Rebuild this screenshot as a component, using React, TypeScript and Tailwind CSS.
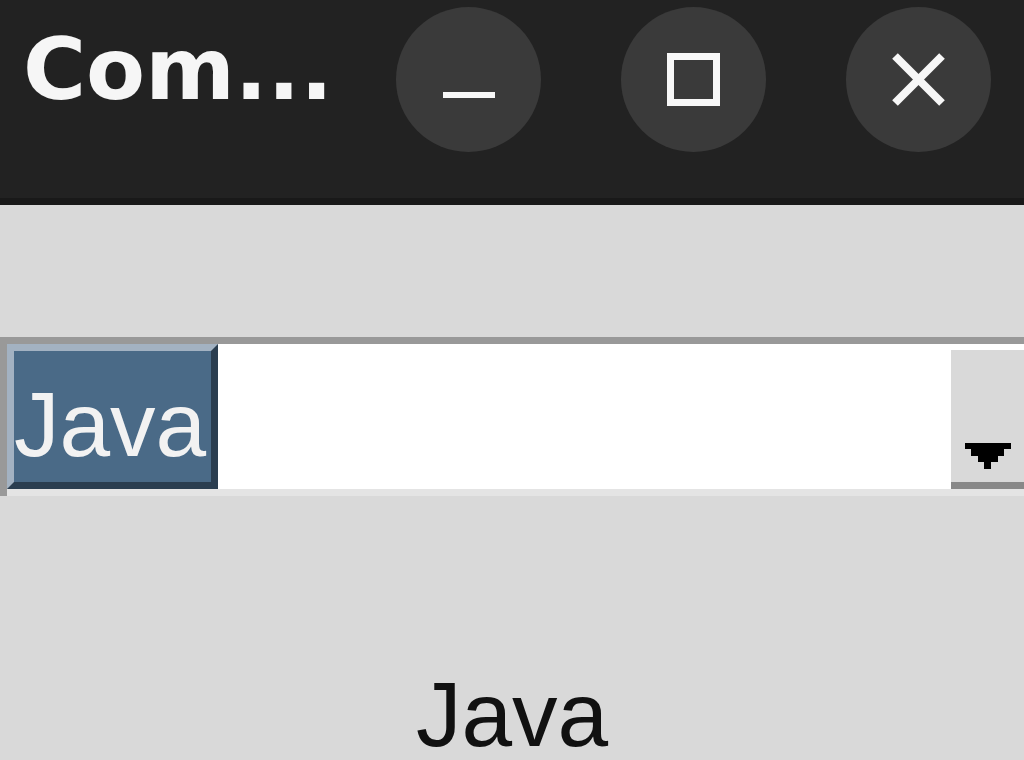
import React from "react";

function Arrow() {
  return (
    <svg width="46" height="26" viewBox="0 0 46 26" className="block">
      <polygon
        fill="#000"
        points="0,0 46,0 46,6 39,6 39,13 33,13 33,19 26,19 26,26 19,26 19,19 13,19 13,13 6,13 6,6 0,6"
      />
    </svg>
  );
}

export default function App() {
  const font = { fontFamily: '"DejaVu Sans", "Liberation Sans", sans-serif' };
  return (
    <div className="w-[1024px] h-[760px] overflow-hidden bg-[#d9d9d9] flex flex-col" style={font}>
      {/* title bar */}
      <div className="h-[198px] bg-[#222222] flex items-start justify-between">
        <div className="pl-[23px] pt-[26px] text-[86px] leading-[86px] font-bold text-[#f6f6f6] whitespace-nowrap">
          Com...
        </div>
        <div className="flex gap-[80px] pt-[7px] pr-[33px]">
          <div className="w-[145px] h-[145px] rounded-full bg-[#3a3a3a] flex items-center justify-center">
            <div className="w-[52px] h-[6px] bg-[#f7f7f7] mt-[30px]" />
          </div>
          <div className="w-[145px] h-[145px] rounded-full bg-[#3a3a3a] flex items-center justify-center">
            <div className="w-[53px] h-[53px] border-[7px] border-[#f7f7f7]" />
          </div>
          <div className="w-[145px] h-[145px] rounded-full bg-[#3a3a3a] flex items-center justify-center">
            <svg width="53" height="53" viewBox="0 0 53 53">
              <line x1="3" y1="3" x2="50" y2="50" stroke="#f7f7f7" strokeWidth="8" />
              <line x1="50" y1="3" x2="3" y2="50" stroke="#f7f7f7" strokeWidth="8" />
            </svg>
          </div>
        </div>
      </div>
      <div className="h-[7px] bg-[#191919]" />

      {/* combo box */}
      <div className="mt-[132px] border-t-[7px] border-l-[7px] border-[#999999] flex flex-col">
        <div className="h-[145px] flex">
          <div className="w-[211px] h-[145px] bg-[#4a6a87] border-t-[7px] border-l-[7px] border-[#a3b2c2] border-b-[7px] border-r-[7px] border-b-[#2b3e50] border-r-[#2b3e50] pt-[28px] text-[91px] leading-[91px] text-[#f2f2f2] whitespace-nowrap overflow-hidden font-['Liberation_Sans',sans-serif]">
            Java
          </div>
          <div className="flex-1 bg-white" />
          <div className="w-[73px] flex flex-col bg-white">
            <div className="h-[6px]" />
            <div className="flex-1 bg-[#d9d9d9] flex items-end justify-center pb-[13px]">
              <Arrow />
            </div>
            <div className="h-[7px] bg-[#888888]" />
          </div>
        </div>
        <div className="h-[7px] bg-[#e4e4e4]" />
      </div>

      {/* label */}
      <div className="mt-[179px] text-center text-[91px] leading-[80px] text-[#111111] whitespace-nowrap font-['Liberation_Sans',sans-serif]">
        Java
      </div>
    </div>
  );
}
